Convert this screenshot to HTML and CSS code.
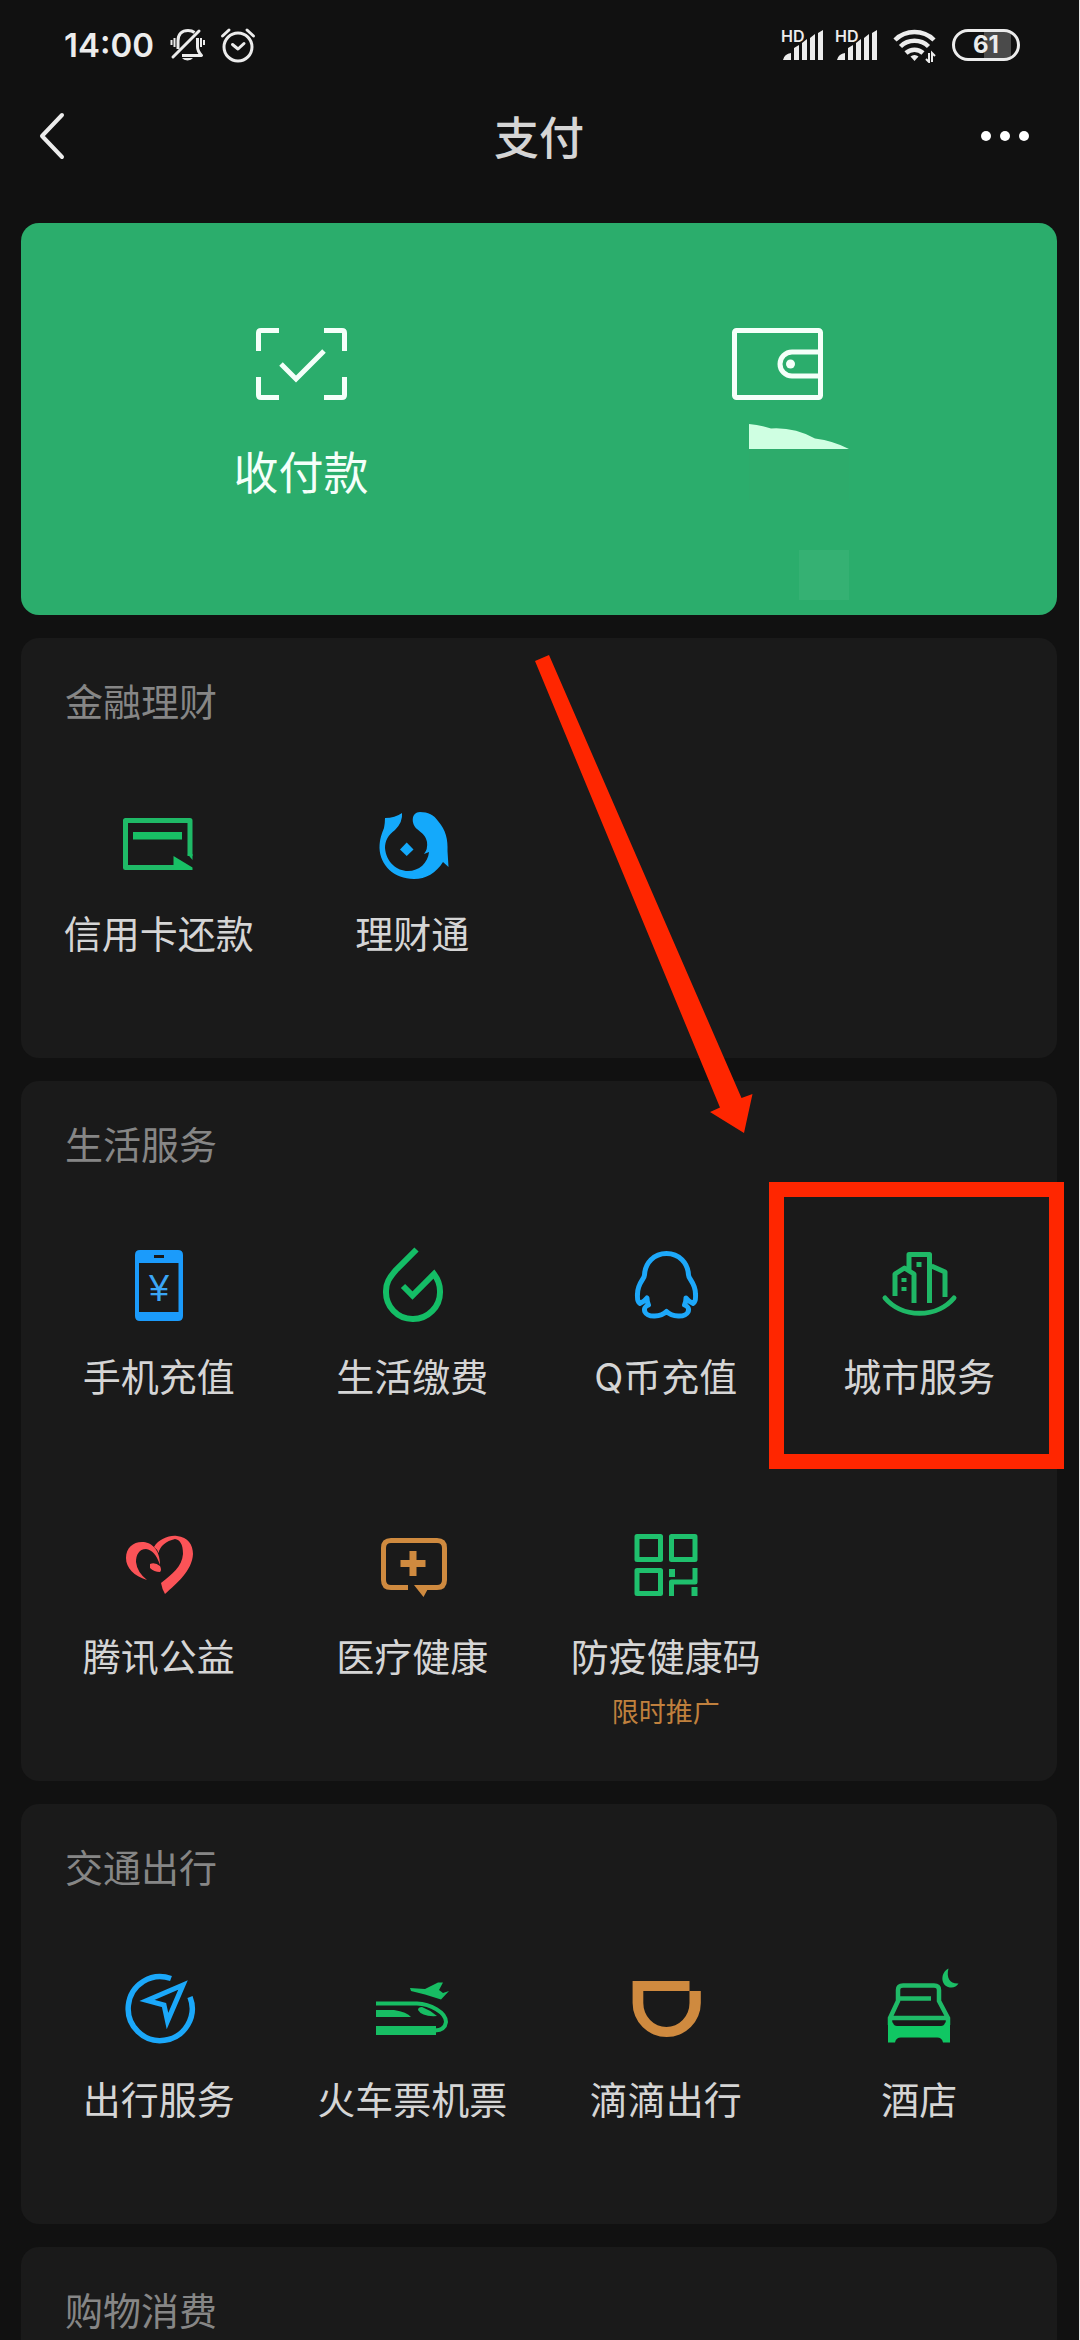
FILE: index.html
```html
<!DOCTYPE html>
<html lang="zh-CN">
<head>
<meta charset="utf-8">
<meta name="viewport" content="width=device-width, initial-scale=1">
<title>支付</title>
<link rel="stylesheet" href="styles.css">
</head>
<body>
<div class="page">
  <div class="statusbar">
    <div class="status-group">
      <span class="clock">14:00</span>
      <svg class="status-bell" viewBox="0 0 36 36" fill="none" stroke="#ececec" stroke-width="3">
        <path d="M8 22V14C8 7 12 3.500 18 3.500q4 0 6.500 2M27.500 11v9q0 4 4 8.500H12" stroke-linejoin="round"/>
        <path d="M3 30 29 4" stroke-linecap="round"/>
        <path d="M1.500 13v5M4.500 11v9M31 11v9M34 13v5" stroke-width="2"/>
        <path d="M12 31h11a6 4 0 0 1-11 0z" fill="#ececec" stroke="none"/>
      </svg>
      <svg class="status-alarm" viewBox="0 0 36 36" fill="none" stroke="#ececec" stroke-width="3" stroke-linecap="round" stroke-linejoin="round">
        <circle cx="18" cy="20" r="14"/>
        <path d="M12.500 17.500 18 22l6-5.500M2.500 9 9 3M27 3l6.500 6"/>
      </svg>
    </div>
    <div class="status-group">
      <svg class="signal" viewBox="0 0 44 34" fill="#ececec">
        <text x="0" y="14" class="hd">HD</text>
        <path d="M2 32a9 8 0 0 1 8-7v7zM13 20l5-3v15h-5zM21 15l5-4v21h-5zM29 10l5-4v26h-5zM37 5l5-3v30h-5z"/>
      </svg>
      <svg class="signal" viewBox="0 0 44 34" fill="#ececec">
        <text x="0" y="14" class="hd">HD</text>
        <path d="M2 32a9 8 0 0 1 8-7v7zM13 20l5-3v15h-5zM21 15l5-4v21h-5zM29 10l5-4v26h-5zM37 5l5-3v30h-5z"/>
      </svg>
      <svg class="wifi" viewBox="0 0 44 36" fill="none" stroke="#ececec" stroke-width="4.500">
        <path d="M2 13a28 28 0 0 1 39 0M7.500 19.500a20 20 0 0 1 28 0M13 26a12.500 12.500 0 0 1 17 0"/>
        <path d="M17.500 29.500a6 6 0 0 1 8 0L21.500 34z" fill="#ececec" stroke="none"/>
        <path d="M36 26v9l-3-3M39 35v-9l3 3" stroke-width="2"/>
      </svg>
      <span class="battery">61</span>
    </div>
  </div>

  <header class="navbar">
    <button class="icon-button" aria-label="返回">
      <svg class="back" viewBox="0 0 26 48" fill="none" stroke="#ececec" stroke-width="4" stroke-linecap="round" stroke-linejoin="round"><path d="M23 3 3 24l20 21"/></svg>
    </button>
    <h1 class="title">支付</h1>
    <button class="icon-button more" aria-label="更多">
      <svg class="dots" viewBox="0 0 50 12" fill="#fff"><circle cx="6" cy="6" r="5"/><circle cx="25" cy="6" r="5"/><circle cx="44" cy="6" r="5"/></svg>
    </button>
  </header>

  <main class="content">
    <section class="wallet-card">
      <a class="wallet-item" href="#">
        <svg class="wallet-icon" viewBox="0 0 92 72" fill="none" stroke="#f4fff9" stroke-width="5">
          <path d="M3.500 23V5q0-2.500 2.500-2.500h18M69 2.500h18q2.500 0 2.500 2.500v18M89.500 49v18q0 2.500-2.500 2.500H69M24 69.500H6q-2.500 0-2.500-2.500V49M26 36l15 15 28-28"/>
        </svg>
        <span class="wallet-label">收付款</span>
      </a>
      <a class="wallet-item" href="#" aria-label="钱包">
        <svg class="wallet-icon" viewBox="0 0 92 72" fill="none" stroke="#f4fff9" stroke-width="5">
          <rect x="3.500" y="2.500" width="86" height="67" rx="2"/>
          <path d="M89 24H61a12 12 0 0 0 0 24h28"/>
          <circle cx="59.500" cy="36" r="4.500" fill="#f4fff9" stroke="none"/>
        </svg>
        <svg class="wallet-cover" viewBox="0 0 100 176">
          <path d="M0 0Q12 1 22 4.500Q45 3 66 14.500Q85 17 100 25H0z" fill="#cfffe2"/>
          <path d="M0 25h100v51H0z" fill="#2dab6b"/>
          <path d="M50 126h50v50H50z" fill="#35b173"/>
        </svg>
      </a>
    </section>

    <section class="card">
      <h2 class="card-title">金融理财</h2>
      <div class="grid">
        <a class="tile" href="#">
          <svg class="icon" viewBox="0 0 100 100">
            <path d="M81 62V26.500H16.500V73.500H66" fill="none" stroke="#1fba67" stroke-width="5" stroke-linejoin="round"/>
            <path d="M24 45.500V38h49v7.500zM64.500 62 83.500 73.500V76h-19zM78.500 60h5v6z" fill="#18c065"/>
          </svg>
          <span class="label">信用卡还款</span>
        </a>
        <a class="tile" href="#">
          <svg class="icon" viewBox="0 0 100 100" fill="#14a9fb">
            <path d="M23 24Q33 24 40 19Q41 28 33 36C26 41 23 47 23 54C24 68 35 77 46 77C57 77 66 69 67 58L62 60Q66 55 65 48C64 42 60 39 55 35C49 30 49 18 58 18C66 18 72 21 76 27C84 36 86 46 85.500 57L86.500 73L81 68C74 79 64 85 52 85C32 85 18 71 17.500 54C17.500 45 20 39 22 34Q23 29 23 24z"/>
            <path d="M44.700 48.500 51.500 55.500 44.700 62 38 55.500z"/>
          </svg>
          <span class="label">理财通</span>
        </a>
      </div>
    </section>

    <section class="card">
      <h2 class="card-title">生活服务</h2>
      <div class="grid">
        <a class="tile" href="#">
          <svg class="icon" viewBox="0 0 100 100">
            <path fill="#1b9bfb" fill-rule="evenodd" d="M31 13h38q5 0 5 5v61q0 5-5 5H31q-5 0-5-5V18q0-5 5-5zM30 26v49h39.500V26zM45 18v3h10v-3z"/>
            <text class="yen" x="50" y="64" text-anchor="middle" fill="#3aa5f5">¥</text>
          </svg>
          <span class="label">手机充值</span>
        </a>
        <a class="tile" href="#">
          <svg class="icon" viewBox="0 0 100 100" fill="none" stroke="#14bd66" stroke-width="6">
            <path d="M54.500 12.500 34 33C27 41 24 46 24 54A26.500 27 0 0 0 50.500 82A27 27 0 0 0 78 54Q78 45 72 37L50.500 58.500 41 49"/>
          </svg>
          <span class="label">生活缴费</span>
        </a>
        <a class="tile" href="#">
          <svg class="icon" viewBox="0 0 100 100" fill="none" stroke="#1da8fa" stroke-width="5" stroke-linejoin="round">
            <path d="M50.500 16.500C38 16.500 29 26 28.500 38C28.500 42 21.500 46 21.500 57Q21 65 24 66.500Q28 65 31 61Q31 65 32.500 68Q27 70 29 75C32 81 45 80 50.500 74.500C56 80 69 81 72 75Q74 70 68.500 68Q70 65 70 61Q73 65 77 66.500Q80 65 79.500 57C79.500 46 72.500 42 72.500 38C72 26 63 16.500 50.500 16.500z"/>
          </svg>
          <span class="label">Q币充值</span>
        </a>
        <a class="tile" href="#">
          <svg class="icon" viewBox="0 0 100 100" fill="none" stroke="#1fb866" stroke-width="5" stroke-linejoin="round">
            <path d="M16 61A43 38 0 0 0 85 61" stroke-linecap="round"/>
            <path d="M26 59V37l9.500-6 9.500 6v29M40 33V17.500h20.500V66M62.500 29 76 35v25"/>
            <path d="M47.500 25h5v5h-5zM32.500 41h5v4h-5zM32.500 50h5v4h-5z" fill="#1fb866" stroke="none"/>
          </svg>
          <span class="label">城市服务</span>
          <span class="marker"></span>
          <svg class="arrow" viewBox="0 0 218 478" fill="#ff2600"><path d="M0 6 14 0 206.500 443 217.500 439 209 478 175 457 185 452.500z"/></svg>
        </a>
        <a class="tile" href="#">
          <svg class="icon" viewBox="0 0 100 100" fill="#fb5357">
            <path d="M38 63C25 59 17 51 17 41C17 31 24 25 33 25C42 25 51 32 51 48Q46 33 37 32C30 32 27 38 27 45Q28 55 38 63zM41 47Q46 45 51 49Q53 53 51 55Q45 55 41 51z"/>
            <path d="M45 30C50 22 60 18 68 19C79 20 84 28 84 37C83 54 68 66 56 77Q53 72 52 66C63 57 73 50 74 37C74 27 71 23 66 22C57 24 51 29 49.500 36Q48 32 45 30z"/>
          </svg>
          <span class="label">腾讯公益</span>
        </a>
        <a class="tile" href="#">
          <svg class="icon" viewBox="0 0 100 100">
            <path d="M46 70.500H29q-7.500 0-7.500-7.500V31q0-7.500 7.500-7.500h46q7.500 0 7.500 7.500v32q0 7.500-7.500 7.500H65" fill="none" stroke="#cf8a3f" stroke-width="5"/>
            <path d="M47.500 34h7v9h9v7h-9v9h-7v-9h-9v-7h9zM52 68h16l-6.500 12z" fill="#cf8a3f"/>
          </svg>
          <span class="label">医疗健康</span>
        </a>
        <a class="tile" href="#">
          <svg class="icon" viewBox="0 0 100 100" fill="none" stroke="#1fc06d" stroke-width="5" stroke-linejoin="round">
            <path d="M21 19.500h23.500v23H21zM55.500 19.500H79v23H55.500zM21 53.500h23.500v23H21zM55.500 79V65H79V51"/>
            <path d="M53 52h6v8h-6zM75.500 70h6v9h-6z" fill="#1fc06d" stroke="none"/>
          </svg>
          <span class="label">防疫健康码</span>
          <span class="note">限时推广</span>
        </a>
      </div>
    </section>

    <section class="card">
      <h2 class="card-title">交通出行</h2>
      <div class="grid">
        <a class="tile" href="#">
          <svg class="icon" viewBox="0 0 100 100" fill="none" stroke="#1ba8fa" stroke-width="5.500">
            <path d="M62 18.500A32 32 0 1 0 81 37"/>
            <path d="M74 25 38 40.500 55 45 58.500 61z" stroke-width="5"/>
          </svg>
          <span class="label">出行服务</span>
        </a>
        <a class="tile" href="#">
          <svg class="icon" viewBox="0 0 100 100" fill="#17bd63">
            <path d="M48 28 63 29 76 22.500h5L77 30l4 3 6-2-8 8.500-16-5-14-3.500zM14 50h18q13 2 17 7H14zM56 50q0-3 4-3 8 3 15 9Q60 57 56 50zM14 66h60v9H14z"/>
            <path d="M14 43.500h41C68 44 84 52 84 62Q83 70 73 70.500" fill="none" stroke="#17bd63" stroke-width="4"/>
          </svg>
          <span class="label">火车票机票</span>
        </a>
        <a class="tile" href="#">
          <svg class="icon" viewBox="0 0 100 100" fill="#cf8a3f">
            <path fill-rule="evenodd" d="M16.600 21H73.500V31H84.800V43A34 34 0 0 1 16.600 43zM27.300 31V43A23 24 0 0 0 73.500 43V31z"/>
          </svg>
          <span class="label">滴滴出行</span>
        </a>
        <a class="tile" href="#">
          <svg class="icon" viewBox="0 0 100 100">
            <path d="M21 65V58L29 41V30q0-4.500 5-4.500h31q5 0 5 4.500V41L79 58V65M22 58H78M30 38.500H62" fill="none" stroke="#1fba67" stroke-width="4.500"/>
            <path d="M19 58l5 5q1 3 4 3h44q3 0 4-3l5-5V82.500h-7q-1-5-6-5H32q-5 0-6 5h-7z" fill="#10c763"/>
            <path d="M79.500 8.500C72 12 71 24 79 27Q86 29 89.500 23.500C81 24 77 18 79.500 8.500z" fill="#1bbf66"/>
          </svg>
          <span class="label">酒店</span>
        </a>
      </div>
    </section>

    <section class="card">
      <h2 class="card-title">购物消费</h2>
    </section>
  </main>
</div>
</body>
</html>
```

FILE: styles.css
```css
* {
  box-sizing: border-box;
}

body {
  margin: 0;
  background: #111;
  color: #d5d5d5;
  font-family: Inter, "Noto Sans CJK SC", sans-serif;
}

h1,
h2 {
  margin: 0;
  font-weight: 400;
}

a {
  color: inherit;
  text-decoration: none;
}

svg {
  display: block;
}

.page {
  height: 100vh;
  overflow: hidden;
  border-right: 1px solid #e8e8e8;
}

/* Status bar */

.statusbar {
  display: flex;
  justify-content: space-between;
  align-items: center;
  height: 90px;
  padding: 0 59px 0 64px;
  color: #ececec;
}

.status-group {
  display: flex;
  align-items: center;
}

.clock {
  margin-right: 16px;
  font-size: 33px;
  font-weight: 600;
}

.status-bell,
.status-alarm {
  width: 36px;
  height: 36px;
}

.status-alarm {
  margin-left: 14px;
}

.signal {
  width: 44px;
  height: 34px;
  margin-right: 10px;
  overflow: visible;
}

.hd {
  font-size: 16px;
  font-weight: 600;
}

.wifi {
  width: 44px;
  height: 36px;
  margin: 0 15px 0 4px;
}

.battery {
  width: 68px;
  height: 32px;
  border: 3px solid #ececec;
  border-radius: 16px;
  background: linear-gradient(90deg, transparent 46%, #4a4a4a 46%, #4a4a4a 90%, transparent 90%);
  font-size: 24px;
  font-weight: 700;
  line-height: 26px;
  text-align: center;
}

/* Navigation bar */

.navbar {
  display: grid;
  grid-template-columns: 1fr auto 1fr;
  align-items: center;
  height: 92px;
  padding: 0 49px 0 38px;
}

.icon-button {
  justify-self: start;
  padding: 0;
  border: 0;
  background: none;
}

.more {
  justify-self: end;
}

.back {
  width: 28px;
  height: 48px;
}

.dots {
  width: 50px;
  height: 12px;
}

.title {
  padding: 6px 0 0 10px;
  font-size: 45px;
  font-weight: 500;
  line-height: 64px;
}

/* Cards */

.content {
  display: flex;
  flex-direction: column;
  gap: 23px;
  padding: 41px 22px 0 21px;
}

.wallet-card {
  display: grid;
  grid-template-columns: 1fr 1fr;
  padding: 105px 42px 109px;
  border-radius: 18px;
  background: #2bad6c;
  color: #f4fff9;
}

.wallet-item {
  position: relative;
  display: flex;
  flex-direction: column;
  align-items: center;
  gap: 42px;
}

.wallet-icon {
  width: 92px;
  height: 72px;
}

.wallet-label {
  font-size: 45px;
  line-height: 64px;
}

.wallet-cover {
  position: absolute;
  top: 96px;
  left: 50%;
  width: 100px;
  height: 176px;
  margin-left: -28px;
}

.card {
  padding: 0 11px 12px;
  border-radius: 18px;
  background: #1a1a1a;
}

.card-title {
  padding: 36px 33px;
  color: #868686;
  font-size: 38px;
  line-height: 56px;
}

.grid {
  display: grid;
  grid-template-columns: repeat(4, 1fr);
  grid-auto-rows: 280px;
}

.tile {
  position: relative;
  display: flex;
  flex-direction: column;
  align-items: center;
  padding-top: 28px;
}

.icon {
  width: 100px;
  height: 100px;
}

.label {
  margin-top: 12px;
  font-size: 38px;
  line-height: 56px;
  white-space: nowrap;
}

.note {
  margin-top: 10px;
  color: #c0803d;
  font-size: 27px;
  line-height: 36px;
}

.yen {
  font-family: "Liberation Sans", sans-serif;
  font-size: 36px;
}

/* Callout over the marked service */

.marker {
  position: absolute;
  inset: -27px -18px 20px -24px;
  border: 15px solid #ff2600;
}

.arrow {
  position: absolute;
  right: 293px;
  bottom: 356px;
  width: 218px;
  height: 478px;
}
```
